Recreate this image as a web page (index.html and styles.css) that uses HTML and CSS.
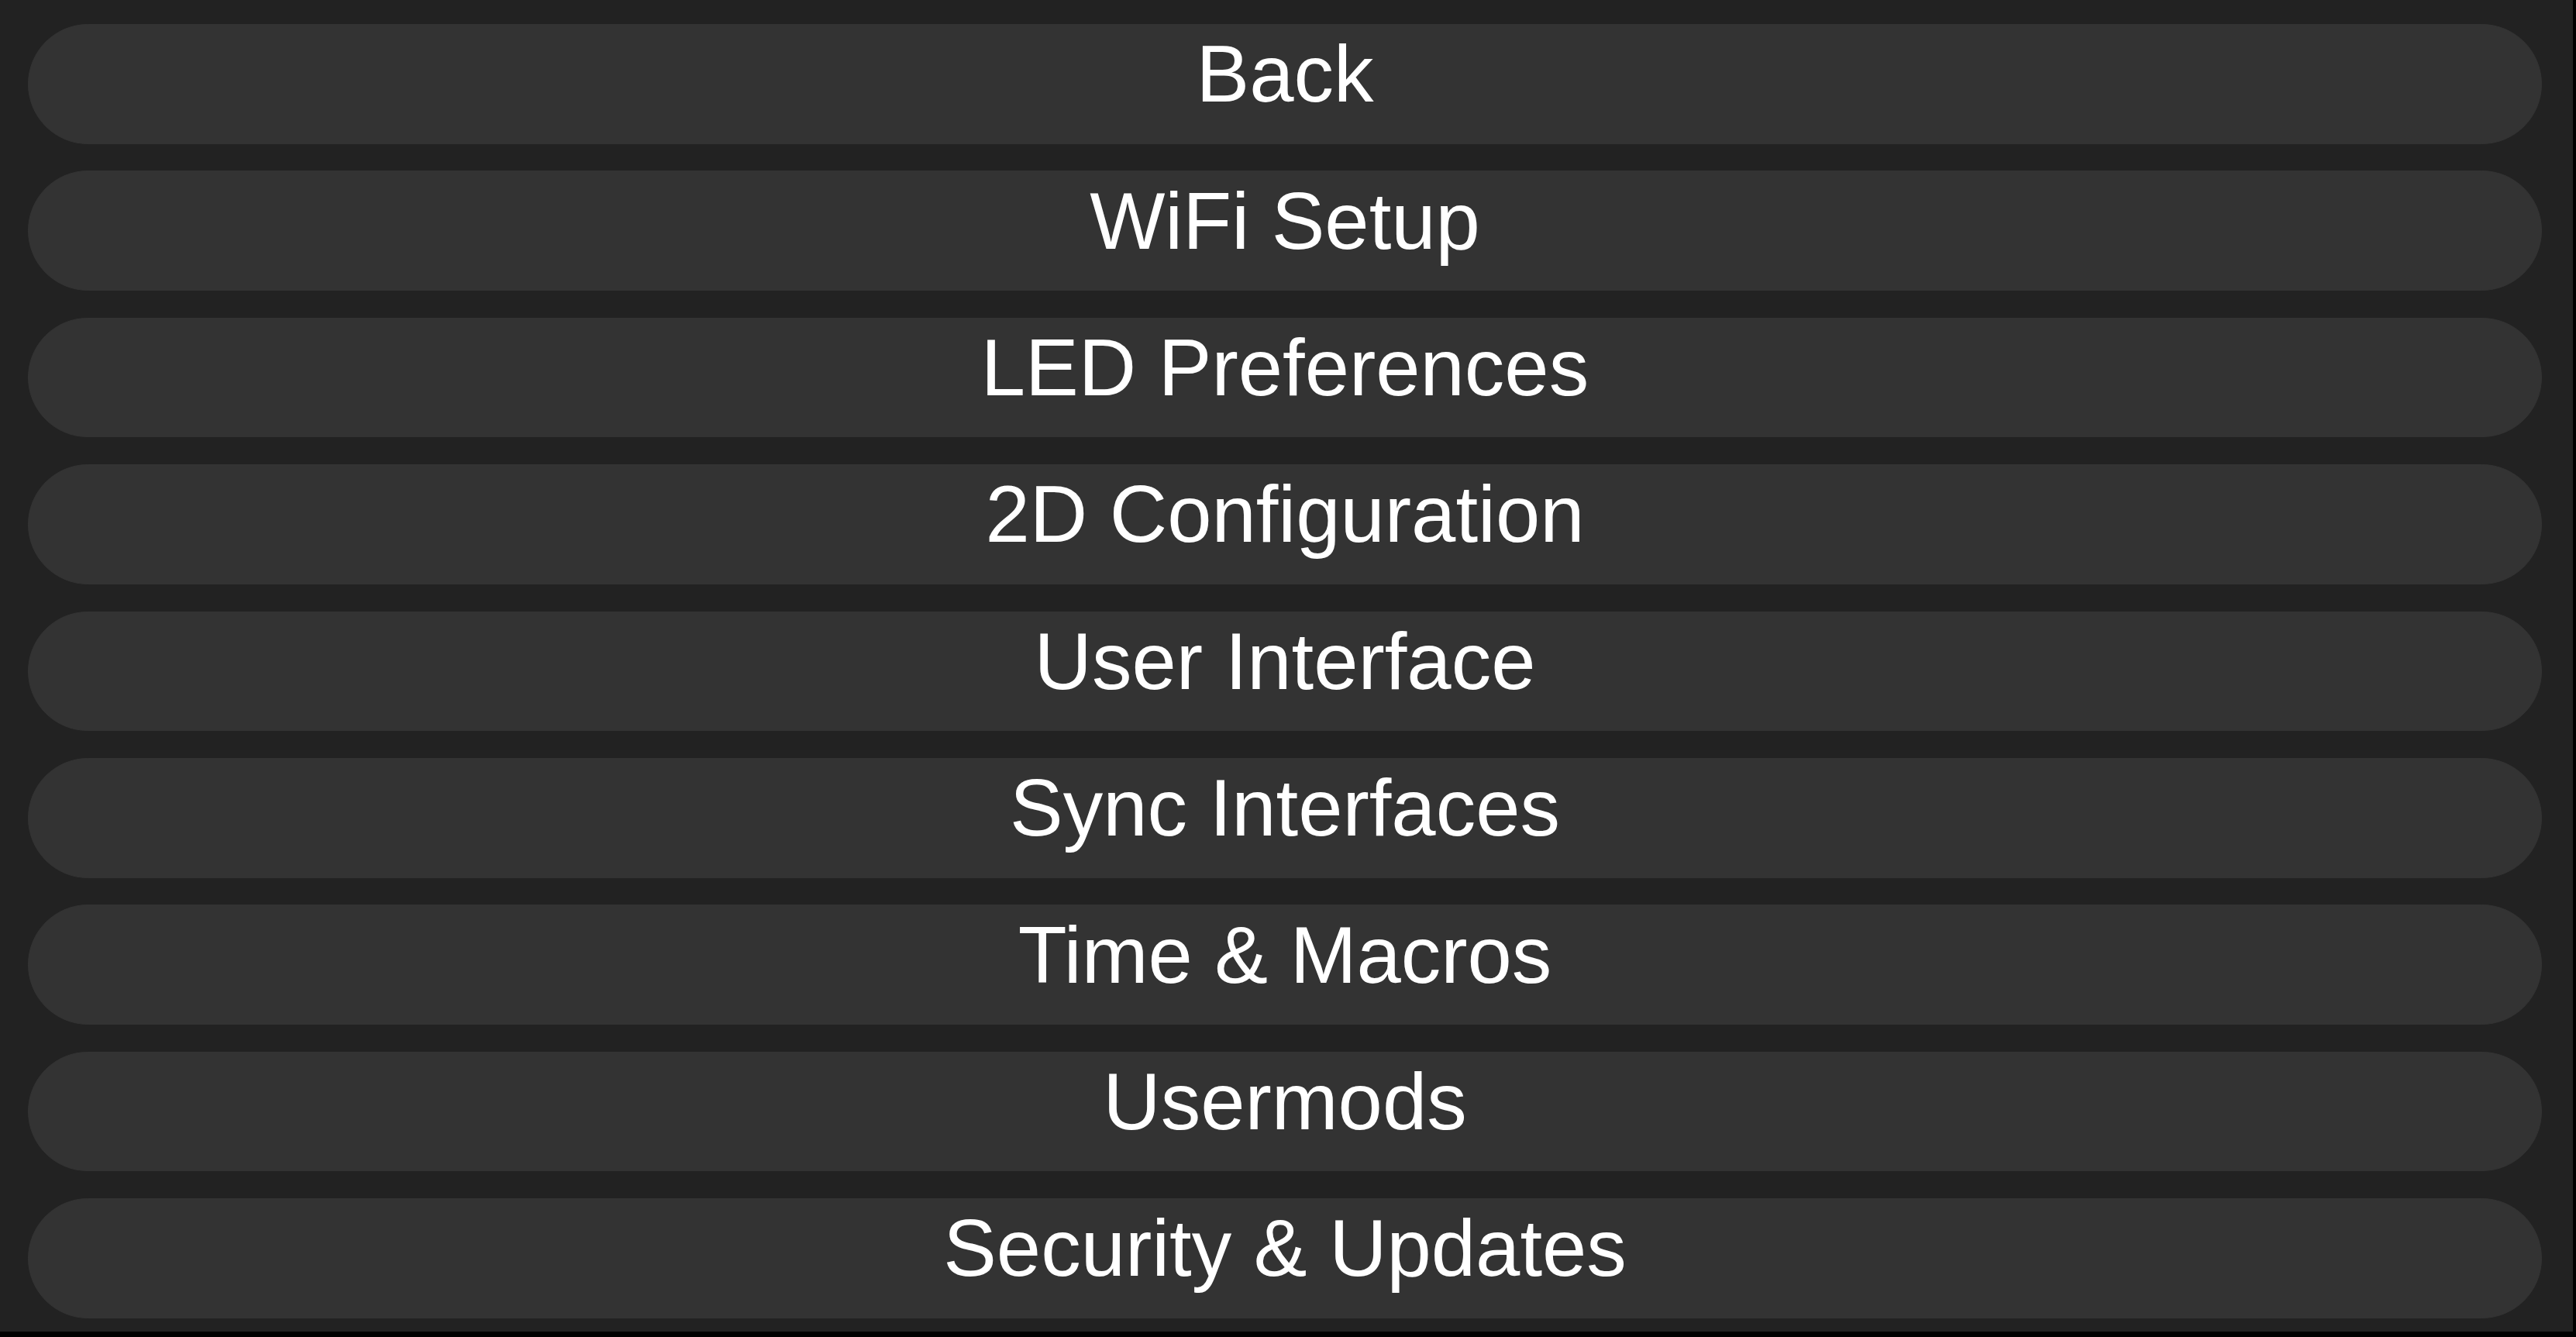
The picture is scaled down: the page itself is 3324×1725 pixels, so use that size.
FILE: index.html
```html
<!DOCTYPE html>
<html lang="en">
<head>
<meta charset="utf-8">
<title>WLED Settings</title>
<link rel="stylesheet" href="styles.css">
</head>
<body>
<nav class="menu">
  <button class="menu-btn" type="button">Back</button>
  <button class="menu-btn" type="button">WiFi Setup</button>
  <button class="menu-btn" type="button">LED Preferences</button>
  <button class="menu-btn" type="button">2D Configuration</button>
  <button class="menu-btn" type="button">User Interface</button>
  <button class="menu-btn" type="button">Sync Interfaces</button>
  <button class="menu-btn" type="button">Time &amp; Macros</button>
  <button class="menu-btn" type="button">Usermods</button>
  <button class="menu-btn" type="button">Security &amp; Updates</button>
</nav>
</body>
</html>
```
FILE: styles.css
```css
html {
  margin: 0;
  padding: 0;
  background: #000;
  height: 100%;
  overflow: hidden;
}

body {
  margin: 0;
  width: 3320px;
  height: 1718px;
  background: #222;
  text-align: center;
  overflow: hidden;
}

.menu {
  display: flex;
  flex-direction: column;
  gap: 34.8px;
  padding: 31px 40px 0 36px;
}

.menu-btn {
  box-sizing: border-box;
  height: 154.6px;
  width: 100%;
  margin: 0;
  padding: 0 0 24px 0;
  background: #333;
  color: #fff;
  border: 1px solid #333;
  border-radius: 78px;
  font-family: "Liberation Sans", Arial, Helvetica, sans-serif;
  font-size: 103px;
  line-height: normal;
  cursor: pointer;
  outline: none;
}
```
